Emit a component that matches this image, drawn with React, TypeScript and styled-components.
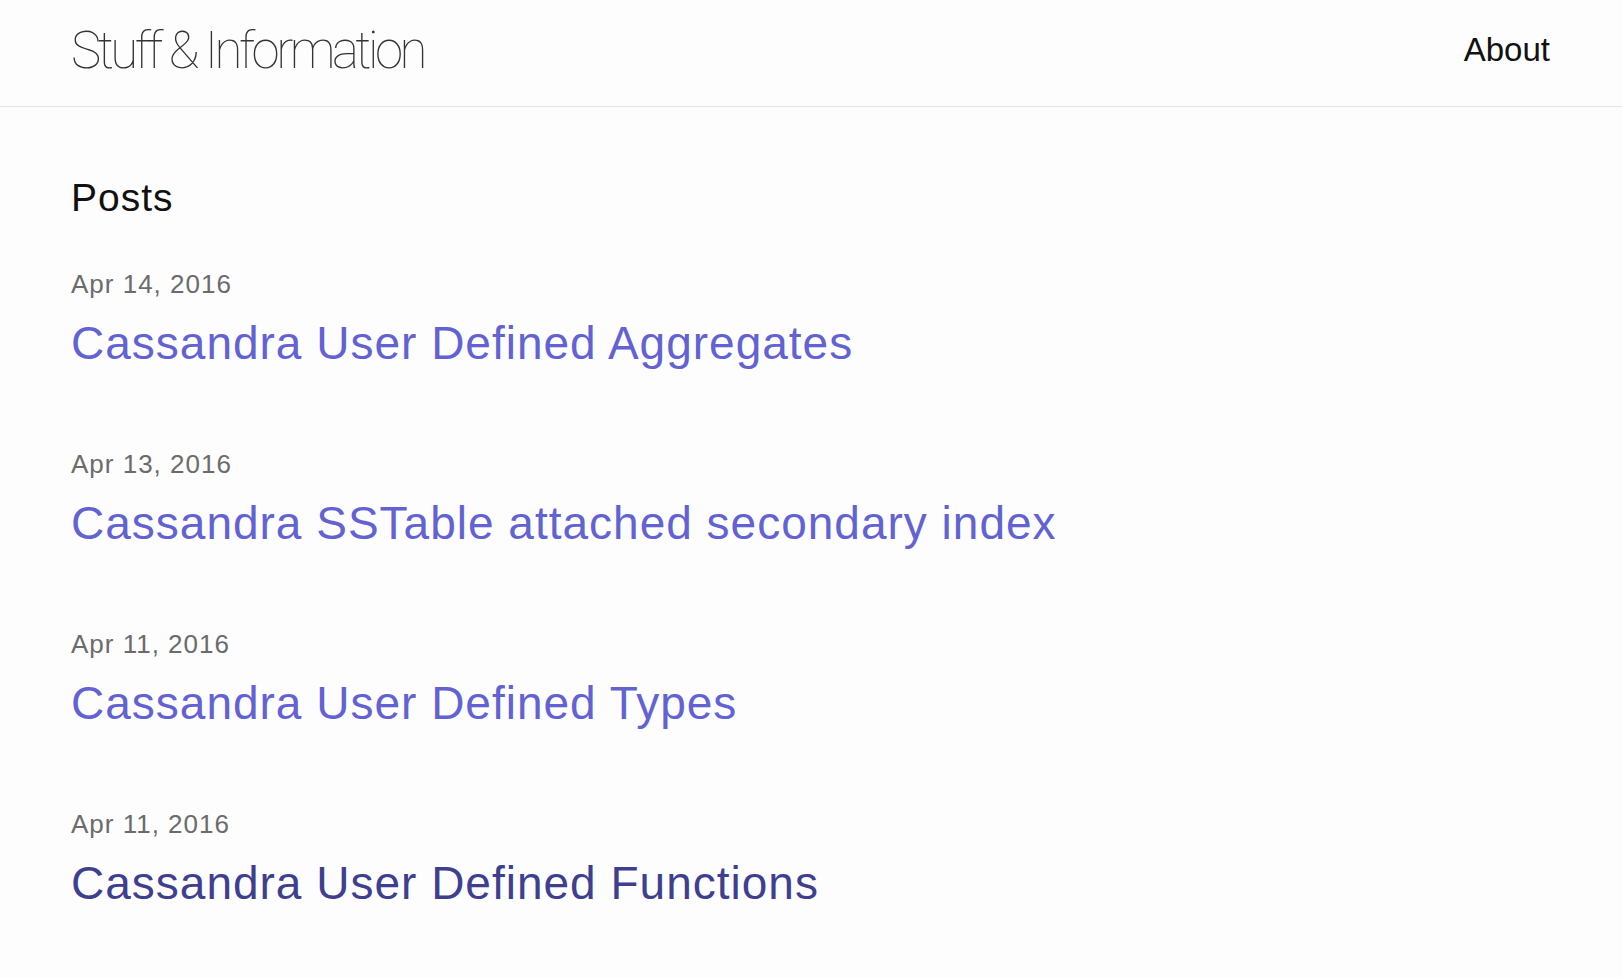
import React from "react";
import styled, { createGlobalStyle } from "styled-components";

const Global = createGlobalStyle`
  html, body { margin: 0; padding: 0; background: #fdfdfd; }
  body { font-family: "Liberation Sans", Arial, sans-serif; color: #111; }
`;

const Header = styled.header`
  box-sizing: content-box;
  height: 106px;
  border-bottom: 1px solid #e3e3e3;
  padding: 0 72px 0 71px;
  display: flex;
  justify-content: space-between;
  align-items: flex-start;
`;

const SiteTitle = styled.a`
  font-family: Roboto, "Liberation Sans", sans-serif;
  font-weight: 100;
  font-size: 51px;
  line-height: 101px;
  letter-spacing: -3.5px;
  color: #333;
  text-decoration: none;
`;

const NavLink = styled.a`
  font-size: 33px;
  line-height: 100px;
  color: #111;
  text-decoration: none;
`;

const Main = styled.main`
  padding: 67px 71px 0;
`;

const PageHeading = styled.h1`
  margin: 0 0 44px;
  font-size: 39px;
  line-height: 48px;
  font-weight: 400;
  letter-spacing: 1px;
  color: #111;
`;

const PostList = styled.ul`
  list-style: none;
  margin: 0;
  padding: 0;
  display: flex;
  flex-direction: column;
  gap: 73px;
`;

const PostItem = styled.li`
  display: flex;
  flex-direction: column;
  gap: 11px;
`;

const PostMeta = styled.span`
  font-size: 26px;
  line-height: 36px;
  letter-spacing: 1px;
  color: #6b6b6b;
`;

const PostLink = styled.a<{ $visited?: boolean }>`
  font-size: 46px;
  line-height: 60px;
  letter-spacing: 1px;
  color: ${(p) => (p.$visited ? "#3f3f8f" : "#6262d2")};
  text-decoration: none;
`;

const posts = [
  { date: "Apr 14, 2016", title: "Cassandra User Defined Aggregates" },
  { date: "Apr 13, 2016", title: "Cassandra SSTable attached secondary index" },
  { date: "Apr 11, 2016", title: "Cassandra User Defined Types" },
  { date: "Apr 11, 2016", title: "Cassandra User Defined Functions", visited: true },
];

export default function App() {
  return (
    <>
      <Global />
      <Header>
        <SiteTitle href="#">Stuff &amp; Information</SiteTitle>
        <NavLink href="#">About</NavLink>
      </Header>
      <Main>
        <PageHeading>Posts</PageHeading>
        <PostList>
          {posts.map((p, i) => (
            <PostItem key={i}>
              <PostMeta>{p.date}</PostMeta>
              <PostLink href="#" $visited={p.visited}>
                {p.title}
              </PostLink>
            </PostItem>
          ))}
        </PostList>
      </Main>
    </>
  );
}
